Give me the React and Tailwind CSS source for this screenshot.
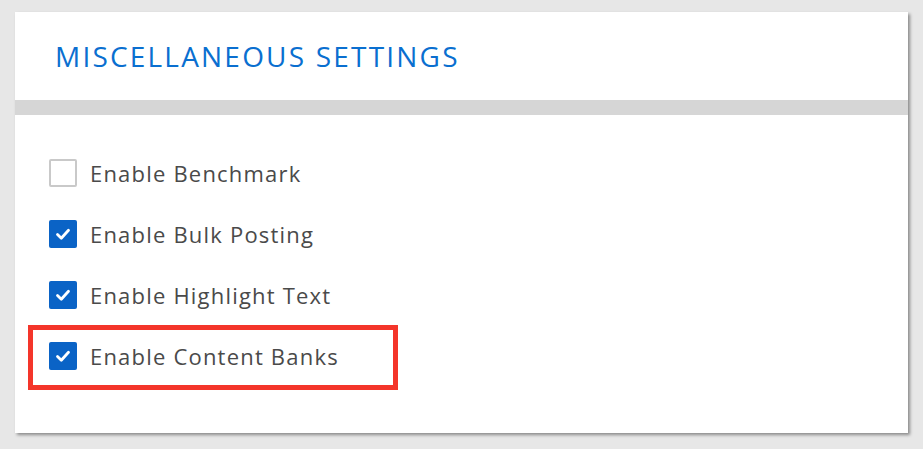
import { useState } from 'react';

const items = [
  { id: 'benchmark', label: 'Enable Benchmark', checked: false },
  { id: 'bulk', label: 'Enable Bulk Posting', checked: true },
  { id: 'highlight', label: 'Enable Highlight Text', checked: true },
  { id: 'banks', label: 'Enable Content Banks', checked: true, marked: true },
];

function Box({ checked }) {
  return checked ? (
    <span className="block h-[28px] w-[28px] rounded-[2px] bg-[#0a63c6]">
      <svg width="28" height="28" viewBox="0 0 28 28" fill="none">
        <path d="M8.5 14.5l3.8 3.8 7.2-8" stroke="#fff" strokeWidth="2.8" strokeLinecap="round" strokeLinejoin="round" />
      </svg>
    </span>
  ) : (
    <span className="block h-[28px] w-[28px] rounded-[2px] border-2 border-[#c9c9c9] bg-white" />
  );
}

export default function App() {
  const [opts, setOpts] = useState(items);

  const toggle = id => setOpts(prev => prev.map(o => o.id === id ? { ...o, checked: !o.checked } : o));

  return (
    <div className="min-h-screen bg-[#e7e7e7] pt-[12px] pl-[15px] font-['Open_Sans','Lato',sans-serif]">
      <div className="w-[893px] h-[421px] bg-white shadow-[2px_2px_3px_rgba(0,0,0,0.4)]">
        <div className="h-[88px] flex items-center pl-[40px]">
          <h2 className="text-[28px] text-[#0a6fd0] leading-none tracking-[2.2px]">MISCELLANEOUS SETTINGS</h2>
        </div>
        <div className="h-[15px] bg-[#d6d6d6]" />
        <div className="pl-[34px] pt-[44px] flex flex-col gap-[33px]">
          {opts.map(o => (
            <div key={o.id} className="relative flex items-center gap-[13px] h-[28px]">
              {o.marked && (
                <div className="absolute left-[-21px] top-[-17px] w-[370px] h-[65px] border-[5px] border-[#f4352a] pointer-events-none" />
              )}
              <button onClick={() => toggle(o.id)} className="cursor-pointer">
                <Box checked={o.checked} />
              </button>
              <span className="text-[22px] text-[#4a4a4a] leading-none tracking-[1.2px]">{o.label}</span>
            </div>
          ))}
        </div>
      </div>
    </div>
  );
}
